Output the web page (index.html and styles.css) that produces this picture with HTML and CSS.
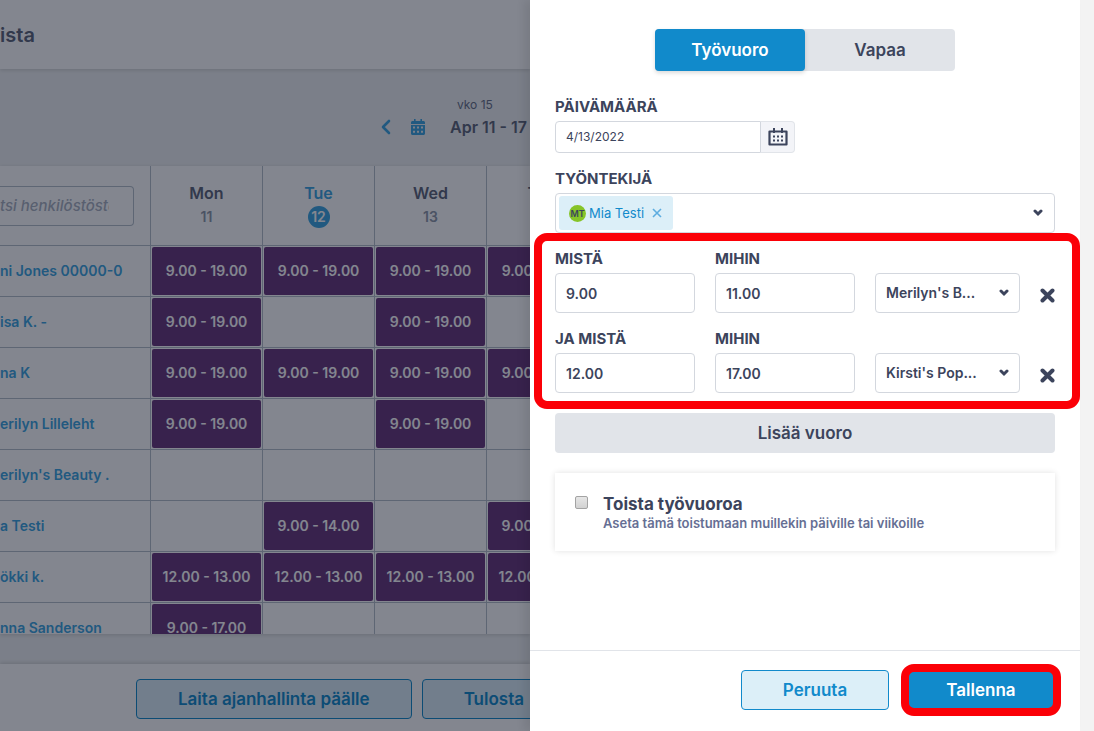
FILE: index.html
```html
<!DOCTYPE html>
<html lang="fi">
<head>
    <meta charset="UTF-8">
    <meta name="viewport" content="width=device-width, initial-scale=1.0">
    <title>Työvuorolista</title>
    <link rel="stylesheet" href="styles.css">
</head>
<body>

    <main class="schedule">
        <header class="schedule-header">
            <h1>ista</h1>
        </header>

        <div class="week-nav">
            <button type="button" class="icon-btn" aria-label="Edellinen viikko">
                <svg width="10" height="16" viewBox="0 0 10 16"><path d="M8 2 2 8l6 6" fill="none" stroke="currentColor" stroke-width="2.6" stroke-linecap="round" stroke-linejoin="round"/></svg>
            </button>
            <button type="button" class="icon-btn" aria-label="Kalenteri">
                <svg width="14" height="16" viewBox="0 0 14 16" fill="currentColor"><path fill-rule="evenodd" d="M3 0h1.6v2h4.8V0H11v2h1.5C13.300 2 14 2.700 14 3.500V5H0V3.500C0 2.700.7 2 1.500 2H3zM0 6h14v8.500c0 .8-.7 1.500-1.500 1.500h-11C.7 16 0 15.300 0 14.500zM2 7.600v2h2v-2zm4 0v2h2v-2zm4 0v2h2v-2zM2 11.800v2h2v-2zm4 0v2h2v-2zm4 0v2h2v-2z"/></svg>
            </button>
            <div class="week-label">
                <span class="week-number">vko 15</span>
                <span class="week-range">Apr 11 - 17</span>
            </div>
        </div>

        <div class="table-wrap">
            <table class="shift-table">
                <thead>
                    <tr>
                        <th class="name-col"><input type="text" class="search" value="tsi henkilöstöstä" aria-label="Etsi henkilöstöstä"></th>
                        <th>Mon<span class="day">11</span></th>
                        <th class="today">Tue<span class="day">12</span></th>
                        <th>Wed<span class="day">13</span></th>
                        <th>Thu<span class="day">14</span></th>
                    </tr>
                </thead>
                <tbody>
                    <tr>
                        <td><a href="#">ni Jones 00000-0</a></td>
                        <td><div class="shift">9.00 - 19.00</div></td>
                        <td><div class="shift">9.00 - 19.00</div></td>
                        <td><div class="shift">9.00 - 19.00</div></td>
                        <td><div class="shift">9.00 - 19.00</div></td>
                    </tr>
                    <tr>
                        <td><a href="#">isa K. -</a></td>
                        <td><div class="shift">9.00 - 19.00</div></td>
                        <td></td>
                        <td><div class="shift">9.00 - 19.00</div></td>
                        <td></td>
                    </tr>
                    <tr>
                        <td><a href="#">na K</a></td>
                        <td><div class="shift">9.00 - 19.00</div></td>
                        <td><div class="shift">9.00 - 19.00</div></td>
                        <td><div class="shift">9.00 - 19.00</div></td>
                        <td><div class="shift">9.00 - 19.00</div></td>
                    </tr>
                    <tr>
                        <td><a href="#">erilyn Lilleleht</a></td>
                        <td><div class="shift">9.00 - 19.00</div></td>
                        <td></td>
                        <td><div class="shift">9.00 - 19.00</div></td>
                        <td></td>
                    </tr>
                    <tr>
                        <td><a href="#">erilyn's Beauty .</a></td>
                        <td></td>
                        <td></td>
                        <td></td>
                        <td></td>
                    </tr>
                    <tr>
                        <td><a href="#">a Testi</a></td>
                        <td></td>
                        <td><div class="shift">9.00 - 14.00</div></td>
                        <td></td>
                        <td><div class="shift">9.00 - 14.00</div></td>
                    </tr>
                    <tr>
                        <td><a href="#">ökki k.</a></td>
                        <td><div class="shift">12.00 - 13.00</div></td>
                        <td><div class="shift">12.00 - 13.00</div></td>
                        <td><div class="shift">12.00 - 13.00</div></td>
                        <td><div class="shift">12.00 - 13.00</div></td>
                    </tr>
                    <tr>
                        <td><a href="#">nna Sanderson</a></td>
                        <td><div class="shift">9.00 - 17.00</div></td>
                        <td></td>
                        <td></td>
                        <td></td>
                    </tr>
                </tbody>
            </table>
        </div>

        <footer class="schedule-footer">
            <button type="button" class="btn btn-light">Laita ajanhallinta päälle</button>
            <button type="button" class="btn btn-light">Tulosta</button>
        </footer>
    </main>

    <form class="drawer">
        <div class="drawer-body">
            <div class="tabs">
                <button type="button" class="tab active">Työvuoro</button>
                <button type="button" class="tab">Vapaa</button>
            </div>

            <div class="field">
                <label for="date">PÄIVÄMÄÄRÄ</label>
                <div class="date-group">
                    <input type="text" id="date" value="4/13/2022">
                    <button type="button" aria-label="Valitse päivä">
                        <svg width="20" height="18" viewBox="0 0 20 18"><path d="M1.500 3.500h17v13h-17z" fill="none" stroke="currentColor" stroke-width="2.200" stroke-linejoin="round"/><path d="M6 0v5M14 0v5" stroke="currentColor" stroke-width="2"/><path d="M5 7.500h2v2H5zM9 7.500h2v2H9zM13 7.500h2v2h-2zM5 11.500h2v2H5zM9 11.500h2v2H9zM13 11.500h2v2h-2z" fill="currentColor"/></svg>
                    </button>
                </div>
            </div>

            <div class="field">
                <label for="employee">TYÖNTEKIJÄ</label>
                <div class="employee-select">
                    <span class="chip">
                        <span class="avatar">MT</span>
                        Mia Testi
                        <button type="button" aria-label="Poista">
                            <svg width="10" height="10" viewBox="0 0 10 10"><path d="m1 1 8 8M9 1 1 9" stroke="currentColor" stroke-width="1.600"/></svg>
                        </button>
                    </span>
                    <input type="text" id="employee">
                    <svg class="caret" width="10" height="8" viewBox="0 0 10 8"><path d="m2 2 3 3 3-3" fill="none" stroke="currentColor" stroke-width="3" stroke-linecap="round"/></svg>
                </div>
            </div>

            <div class="shifts">
                <div class="shift-row">
                    <div class="field">
                        <label for="from1">MISTÄ</label>
                        <input type="text" id="from1" value="9.00">
                    </div>
                    <div class="field">
                        <label for="to1">MIHIN</label>
                        <input type="text" id="to1" value="11.00">
                    </div>
                    <div class="select">
                        <select aria-label="Toimipiste"><option>Merilyn's B...</option></select>
                        <svg class="caret" width="10" height="8" viewBox="0 0 10 8"><path d="m2 2 3 3 3-3" fill="none" stroke="currentColor" stroke-width="3" stroke-linecap="round"/></svg>
                    </div>
                    <button type="button" class="remove" aria-label="Poista vuoro">
                        <svg width="15" height="15" viewBox="0 0 15 15"><path d="m2.500 2.500 10 10M12.500 2.500l-10 10" stroke="currentColor" stroke-width="4" stroke-linecap="round"/></svg>
                    </button>
                </div>
                <div class="shift-row">
                    <div class="field">
                        <label for="from2">JA MISTÄ</label>
                        <input type="text" id="from2" value="12.00">
                    </div>
                    <div class="field">
                        <label for="to2">MIHIN</label>
                        <input type="text" id="to2" value="17.00">
                    </div>
                    <div class="select">
                        <select aria-label="Toimipiste"><option>Kirsti's Pop...</option></select>
                        <svg class="caret" width="10" height="8" viewBox="0 0 10 8"><path d="m2 2 3 3 3-3" fill="none" stroke="currentColor" stroke-width="3" stroke-linecap="round"/></svg>
                    </div>
                    <button type="button" class="remove" aria-label="Poista vuoro">
                        <svg width="15" height="15" viewBox="0 0 15 15"><path d="m2.500 2.500 10 10M12.500 2.500l-10 10" stroke="currentColor" stroke-width="4" stroke-linecap="round"/></svg>
                    </button>
                </div>
            </div>

            <button type="button" class="add-shift">Lisää vuoro</button>

            <div class="repeat">
                <input type="checkbox" id="repeat">
                <label for="repeat">
                    <span class="repeat-title">Toista työvuoroa</span>
                    <span class="repeat-hint">Aseta tämä toistumaan muillekin päiville tai viikoille</span>
                </label>
            </div>
        </div>

        <div class="drawer-footer">
            <button type="button" class="btn btn-light">Peruuta</button>
            <button type="submit" class="btn btn-save">Tallenna</button>
        </div>
    </form>

</body>
</html>
```

FILE: styles.css
```css
* {
    box-sizing: border-box;
}
body {
    margin: 0;
    height: 100vh;
    display: flex;
    padding-right: 14px;
    background: #f3f3f3;
    color: #3c445c;
    font-family: Inter, "Open Sans", sans-serif;
    font-size: 14px;
    font-weight: 600;
    line-height: 16px;
}
button,
input,
select {
    font: inherit;
    color: inherit;
    margin: 0;
}
button {
    padding: 0;
    border: none;
    background: none;
    cursor: pointer;
}
svg {
    display: block;
}

/* schedule behind the drawer */
.schedule {
    position: relative;
    flex: 1;
    min-width: 0;
    display: flex;
    flex-direction: column;
    overflow: hidden;
    background: #eff1f2;
    white-space: nowrap;
}
.schedule::after {
    content: "";
    position: absolute;
    inset: 0;
    background: rgba(7, 13, 31, 0.5);
}
.schedule-header {
    height: 69px;
    display: flex;
    align-items: center;
    background: #fff;
    box-shadow: 0 1px 4px rgba(0, 0, 0, 0.15);
}
.schedule-header h1 {
    margin: 0;
    font-size: 20px;
    font-weight: 600;
    line-height: 24px;
    color: #5c6478;
}
.week-nav {
    height: 97px;
    display: flex;
    align-items: flex-start;
    gap: 20px;
    padding-top: 28px;
    padding-left: 381px;
}
.icon-btn {
    margin-top: 22px;
    color: #3aa5e0;
}
.week-label {
    display: flex;
    flex-direction: column;
    gap: 4px;
    padding-left: 5px;
}
.week-number {
    padding-left: 7px;
    font-size: 12px;
    font-weight: 400;
    color: #666f86;
}
.week-range {
    font-size: 16px;
    line-height: 20px;
    color: #5c6478;
}
.table-wrap {
    flex: 1;
    min-height: 0;
    overflow: hidden;
    background: #fff;
    box-shadow: 0 1px 4px rgba(0, 0, 0, 0.15);
}
.shift-table {
    width: 599px;
    table-layout: fixed;
    border-collapse: separate;
    border-spacing: 0;
}
.shift-table th,
.shift-table td {
    padding: 0;
    border-right: 1px solid #b4bfc8;
    border-bottom: 1px solid #b4bfc8;
}
.shift-table th {
    height: 80px;
    font-size: 16px;
    font-weight: 600;
    line-height: 20px;
    text-align: center;
    color: #5c6478;
}
.shift-table .name-col {
    width: 151px;
    text-align: left;
}
.search {
    display: block;
    width: 134px;
    height: 40px;
    padding: 0 24px 0 0;
    border: 1px solid #b4bfc8;
    border-left: none;
    border-radius: 0 4px 4px 0;
    background: #fff;
    font-size: 15px;
    font-style: italic;
    font-weight: 500;
    color: #a9b1be;
}
.day {
    display: block;
    width: 22px;
    height: 22px;
    margin: 3px auto 0;
    border-radius: 50%;
    font-size: 14px;
    line-height: 22px;
    color: #8f98a9;
}
.today .day {
    background: #3aa5e0;
    color: #fff;
}
.shift-table .today {
    color: #3aa5e0;
}
.shift-table td {
    height: 51px;
}
.shift-table a {
    color: #3aa5e0;
    text-decoration: none;
}
.shift {
    height: 48px;
    margin: 1px;
    border-radius: 2px;
    background: #69377b;
    color: #fff;
    line-height: 48px;
    text-align: center;
}
.schedule-footer {
    display: flex;
    gap: 10px;
    height: 67px;
    margin-top: 30px;
    padding: 15px 0 0 136px;
    background: #fff;
    box-shadow: 0 -1px 4px rgba(0, 0, 0, 0.15);
}
.schedule-footer .btn {
    padding: 0 41px;
}

.btn {
    flex-shrink: 0;
    height: 40px;
    border-radius: 4px;
    font-size: 17px;
}
.btn-light {
    border: 1px solid #118acb;
    background: #dceff8;
    color: #118acb;
}

/* drawer */
.drawer {
    position: relative;
    flex: 0 0 550px;
    display: flex;
    flex-direction: column;
    background: #fff;
    box-shadow: -6px 0 8px rgba(0, 0, 0, 0.08);
}
.drawer-body {
    flex: 1;
    padding: 29px 25px 0;
}
.tabs {
    display: flex;
    width: 300px;
    margin: 0 auto 28px;
    border-radius: 4px;
    background: #e1e4e9;
}
.tab {
    flex: 1;
    height: 42px;
    border-radius: 4px;
    font-size: 17px;
}
.tab.active {
    background: #118acb;
    color: #fff;
    box-shadow: 0 2px 4px rgba(0, 0, 0, 0.15);
}
.field {
    margin-bottom: 18px;
}
.field label {
    display: block;
    margin-bottom: 6px;
    font-size: 15px;
    font-weight: 700;
}
.date-group {
    display: flex;
    width: 240px;
    height: 32px;
}
.date-group input {
    flex: 1;
    min-width: 0;
    padding: 0 10px;
    border: 1px solid #d3d7de;
    border-radius: 4px 0 0 4px;
    font-size: 12px;
    font-weight: 400;
}
.date-group button {
    width: 34px;
    padding-left: 7px;
    border: 1px solid #e1e4e9;
    border-left: none;
    border-radius: 0 4px 4px 0;
    background: #f3f4f8;
}
.employee-select {
    display: flex;
    align-items: center;
    height: 40px;
    padding: 0 11px 0 3px;
    border: 1px solid #d3d7de;
    border-radius: 4px;
}
.employee-select input {
    flex: 1;
    min-width: 0;
    border: none;
    outline: none;
}
.chip {
    display: flex;
    align-items: center;
    gap: 3px;
    height: 34px;
    padding: 0 11px 0 10px;
    border-radius: 3px;
    background: #dceff8;
    color: #118acb;
    font-size: 13px;
    font-weight: 400;
}
.chip button {
    margin-left: 5px;
    color: #5dade0;
}
.avatar {
    width: 17px;
    height: 17px;
    border-radius: 50%;
    background: #86c428;
    color: #3c445c;
    font-size: 9px;
    font-weight: 600;
    line-height: 17px;
    text-align: center;
}
.shifts {
    position: relative;
    display: flex;
    flex-direction: column;
    gap: 18px;
}
.shifts::after {
    content: "";
    position: absolute;
    inset: -18px -25px -16px -21px;
    border: 8px solid #fb0007;
    border-radius: 13px;
    pointer-events: none;
}
.shift-row {
    display: grid;
    grid-template-columns: 140px 140px 145px 1fr;
    column-gap: 20px;
    align-items: end;
}
.shift-row .field {
    margin-bottom: 0;
}
.shift-row input,
.shift-row select {
    display: block;
    width: 100%;
    height: 40px;
    padding: 0 10px;
    border: 1px solid #d3d7de;
    border-radius: 4px;
    background: #fff;
}
.select {
    position: relative;
}
.select select {
    appearance: none;
}
.select .caret {
    position: absolute;
    top: 16px;
    right: 11px;
    pointer-events: none;
}
.remove {
    justify-self: end;
    margin-bottom: 10px;
}
.add-shift {
    display: block;
    width: 100%;
    height: 40px;
    margin: 20px 0;
    border-radius: 4px;
    background: #e1e4e9;
    font-size: 17px;
}
.repeat {
    display: flex;
    align-items: flex-start;
    gap: 15px;
    padding: 20px;
    box-shadow: 0 0 6px rgba(0, 0, 0, 0.12);
}
.repeat input {
    appearance: none;
    width: 13px;
    height: 13px;
    margin-top: 3px;
    border: 1px solid #a3a3a3;
    border-radius: 2px;
    background: linear-gradient(#e6e6e6, #d2d2d2);
}
.repeat-title,
.repeat-hint {
    display: block;
}
.repeat-title {
    font-size: 17px;
    font-weight: 700;
    line-height: 22px;
}
.repeat-hint {
    font-size: 13px;
    color: #666f94;
}
.drawer-footer {
    display: flex;
    justify-content: flex-end;
    gap: 18px;
    height: 81px;
    padding: 19px 25px 0;
    border-top: 1px solid #e1e4e9;
}
.drawer-footer .btn {
    width: 148px;
}
.btn-save {
    position: relative;
    background: #118acb;
    color: #fff;
}
.btn-save::after {
    content: "";
    position: absolute;
    inset: -6px;
    border: 8px solid #fb0007;
    border-radius: 13px;
}
```
